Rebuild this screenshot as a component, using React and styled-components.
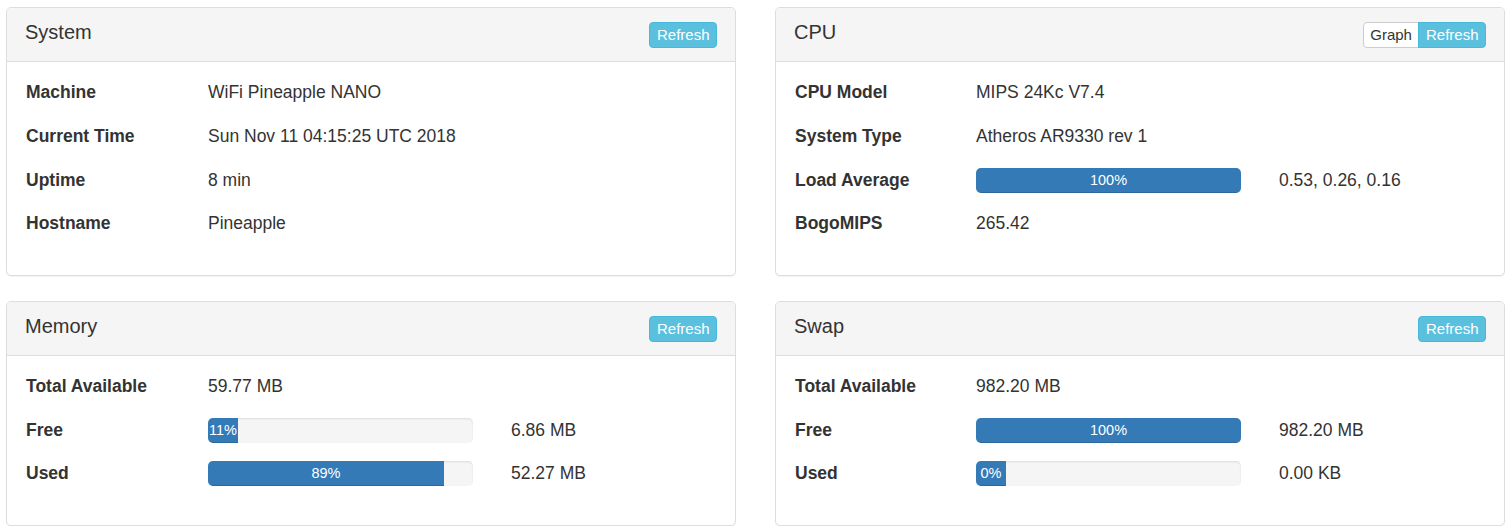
import React from 'react';
import styled, { createGlobalStyle } from 'styled-components';

const GlobalStyle = createGlobalStyle`
  body {
    margin: 0;
    background: #fff;
    font-family: "Liberation Sans", Arial, sans-serif;
    color: #333;
  }
`;

const Page = styled.div`
  display: grid;
  grid-template-columns: 730px 730px;
  column-gap: 39px;
  row-gap: 25px;
  padding: 7px 0 0 6px;
  align-items: start;
`;

const Panel = styled.div`
  border: 1px solid #ddd;
  border-radius: 5px;
  background: #fff;
  box-shadow: 0 1px 1px rgba(0, 0, 0, 0.05);
  overflow: hidden;
`;

const Heading = styled.div`
  display: flex;
  justify-content: space-between;
  align-items: flex-start;
  padding: 13px 18px 13px 18px;
  background: #f5f5f5;
  border-bottom: 1px solid #ddd;
`;

const Title = styled.h3`
  margin: 0;
  font-size: 20px;
  line-height: 22px;
  font-weight: normal;
  color: #333;
`;

const BtnGroup = styled.div`
  display: flex;
  margin-top: 1px;
`;

const Btn = styled.button`
  font-family: inherit;
  font-size: 15px;
  line-height: 24px;
  height: 26px;
  padding: 0 6.5px;
  border: 1px solid ${(p) => (p.$light ? '#ccc' : '#46b8da')};
  background: ${(p) => (p.$light ? '#fff' : '#5bc0de')};
  color: ${(p) => (p.$light ? '#333' : '#fff')};
  border-radius: 4px;
  cursor: pointer;
  & + & {
    margin-left: -1px;
  }
  ${BtnGroup} > &:not(:last-child) {
    border-top-right-radius: 0;
    border-bottom-right-radius: 0;
  }
  ${BtnGroup} > &:not(:first-child) {
    border-top-left-radius: 0;
    border-bottom-left-radius: 0;
  }
`;

const Body = styled.div`
  padding: 9px 18px 29px 19px;
`;

const Row = styled.div`
  display: grid;
  grid-template-columns: ${(p) => p.$labelWidth}px 265px 1fr;
  align-items: center;
  height: 43.67px;
  font-size: 17.5px;
`;

const Label = styled.div`
  font-weight: bold;
`;

const Value = styled.div`
  grid-column: ${(p) => (p.$wide ? '2 / 4' : 'auto')};
  padding-left: ${(p) => (p.$wide ? 0 : 38)}px;
`;

const Track = styled.div`
  height: 25px;
  background: #f5f5f5;
  border-radius: 5px;
  box-shadow: inset 0 1px 2px rgba(0, 0, 0, 0.1);
  overflow: hidden;
`;

const Fill = styled.div`
  height: 100%;
  min-width: 30px;
  background: #337ab7;
  box-shadow: inset 0 -1px 0 rgba(0, 0, 0, 0.15);
  color: #fff;
  font-size: 14.5px;
  line-height: 25px;
  text-align: center;
  white-space: nowrap;
`;

function Bar({ pct }) {
  return (
    <Track>
      <Fill style={{ width: `${pct}%` }}>{pct}%</Fill>
    </Track>
  );
}

function InfoPanel({ title, graph, rows, labelWidth = 182 }) {
  return (
    <Panel>
      <Heading>
        <Title>{title}</Title>
        <BtnGroup>
          {graph && <Btn $light>Graph</Btn>}
          <Btn>Refresh</Btn>
        </BtnGroup>
      </Heading>
      <Body>
        {rows.map((r) => (
          <Row key={r.label} $labelWidth={labelWidth}>
            <Label>{r.label}</Label>
            {r.pct !== undefined ? (
              <>
                <Bar pct={r.pct} />
                <Value>{r.value}</Value>
              </>
            ) : (
              <Value $wide>{r.value}</Value>
            )}
          </Row>
        ))}
      </Body>
    </Panel>
  );
}

const system = [
  { label: 'Machine', value: 'WiFi Pineapple NANO' },
  { label: 'Current Time', value: 'Sun Nov 11 04:15:25 UTC 2018' },
  { label: 'Uptime', value: '8 min' },
  { label: 'Hostname', value: 'Pineapple' },
];

const cpu = [
  { label: 'CPU Model', value: 'MIPS 24Kc V7.4' },
  { label: 'System Type', value: 'Atheros AR9330 rev 1' },
  { label: 'Load Average', pct: 100, value: '0.53, 0.26, 0.16' },
  { label: 'BogoMIPS', value: '265.42' },
];

const memory = [
  { label: 'Total Available', value: '59.77 MB' },
  { label: 'Free', pct: 11, value: '6.86 MB' },
  { label: 'Used', pct: 89, value: '52.27 MB' },
];

const swap = [
  { label: 'Total Available', value: '982.20 MB' },
  { label: 'Free', pct: 100, value: '982.20 MB' },
  { label: 'Used', pct: 0, value: '0.00 KB' },
];

export default function App() {
  return (
    <>
      <GlobalStyle />
      <Page>
        <InfoPanel title="System" rows={system} />
        <InfoPanel title="CPU" graph rows={cpu} labelWidth={181} />
        <InfoPanel title="Memory" rows={memory} />
        <InfoPanel title="Swap" rows={swap} labelWidth={181} />
      </Page>
    </>
  );
}
